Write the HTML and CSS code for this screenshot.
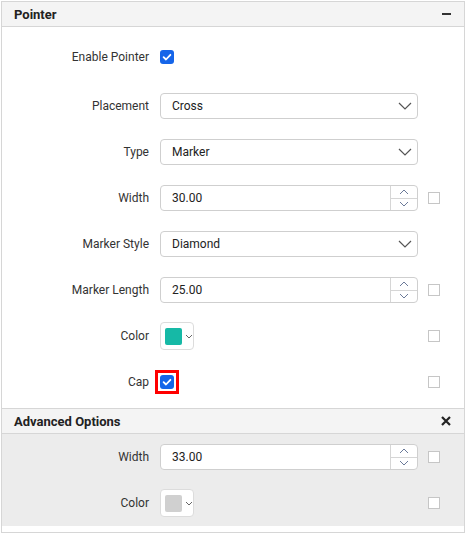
FILE: index.html
```html
<!DOCTYPE html>
<html>
<head>
<meta charset="utf-8">
<link rel="stylesheet" href="styles.css">
</head>
<body>
<div class="panel">
  <div class="hdr first">
    <span class="title">Pointer</span>
    <span class="minus"></span>
  </div>
  <div class="section">
    <div class="row r-first">
      <label class="lbl">Enable Pointer</label>
      <div class="ctl"><span class="cb on"><svg viewBox="0 0 14 14" width="14" height="14"><path d="M3.6 7.2 L6 9.5 L10.4 4.8" fill="none" stroke="#fff" stroke-width="1.8" stroke-linecap="round" stroke-linejoin="round"/></svg></span></div>
      <div></div>
    </div>
    <div class="row r-second">
      <label class="lbl">Placement</label>
      <div class="ctl"><div class="dd"><span>Cross</span><svg class="chev" viewBox="0 0 14 8" width="14" height="8"><path d="M1 1 L7 7 L13 1" fill="none" stroke="#555" stroke-width="1.2"/></svg></div></div>
      <div></div>
    </div>
    <div class="row">
      <label class="lbl">Type</label>
      <div class="ctl"><div class="dd"><span>Marker</span><svg class="chev" viewBox="0 0 14 8" width="14" height="8"><path d="M1 1 L7 7 L13 1" fill="none" stroke="#555" stroke-width="1.2"/></svg></div></div>
      <div></div>
    </div>
    <div class="row">
      <label class="lbl">Width</label>
      <div class="ctl"><div class="num"><span class="val">30.00</span><div class="spin"><span class="up"><svg viewBox="0 0 10 6" width="10" height="6"><path d="M1 5 L5 1 L9 5" fill="none" stroke="#6b7a99" stroke-width="1"/></svg></span><span class="down"><svg viewBox="0 0 10 6" width="10" height="6"><path d="M1 1 L5 5 L9 1" fill="none" stroke="#6b7a99" stroke-width="1"/></svg></span></div></div></div>
      <div class="cb off"></div>
    </div>
    <div class="row">
      <label class="lbl">Marker Style</label>
      <div class="ctl"><div class="dd"><span>Diamond</span><svg class="chev" viewBox="0 0 14 8" width="14" height="8"><path d="M1 1 L7 7 L13 1" fill="none" stroke="#555" stroke-width="1.2"/></svg></div></div>
      <div></div>
    </div>
    <div class="row">
      <label class="lbl">Marker Length</label>
      <div class="ctl"><div class="num"><span class="val">25.00</span><div class="spin"><span class="up"><svg viewBox="0 0 10 6" width="10" height="6"><path d="M1 5 L5 1 L9 5" fill="none" stroke="#6b7a99" stroke-width="1"/></svg></span><span class="down"><svg viewBox="0 0 10 6" width="10" height="6"><path d="M1 1 L5 5 L9 1" fill="none" stroke="#6b7a99" stroke-width="1"/></svg></span></div></div></div>
      <div class="cb off"></div>
    </div>
    <div class="row">
      <label class="lbl">Color</label>
      <div class="ctl"><div class="cp"><span class="sw teal"></span><svg viewBox="0 0 8 5" width="8" height="5"><path d="M1 1 L4 4 L7 1" fill="none" stroke="#666" stroke-width="1"/></svg></div></div>
      <div class="cb off"></div>
    </div>
    <div class="row">
      <label class="lbl">Cap</label>
      <div class="ctl"><span class="hl"><span class="cb on"><svg viewBox="0 0 14 14" width="14" height="14"><path d="M3.6 7.2 L6 9.5 L10.4 4.8" fill="none" stroke="#fff" stroke-width="1.8" stroke-linecap="round" stroke-linejoin="round"/></svg></span></span></div>
      <div class="cb off"></div>
    </div>
  </div>
  <div class="hdr">
    <span class="title">Advanced Options</span>
    <svg class="close" viewBox="0 0 10 10" width="10" height="10"><path d="M1 1 L9 9 M9 1 L1 9" stroke="#222" stroke-width="2.2"/></svg>
  </div>
  <div class="section adv">
    <div class="row">
      <label class="lbl">Width</label>
      <div class="ctl"><div class="num"><span class="val">33.00</span><div class="spin"><span class="up"><svg viewBox="0 0 10 6" width="10" height="6"><path d="M1 5 L5 1 L9 5" fill="none" stroke="#6b7a99" stroke-width="1"/></svg></span><span class="down"><svg viewBox="0 0 10 6" width="10" height="6"><path d="M1 1 L5 5 L9 1" fill="none" stroke="#6b7a99" stroke-width="1"/></svg></span></div></div></div>
      <div class="cb off"></div>
    </div>
    <div class="row">
      <label class="lbl">Color</label>
      <div class="ctl"><div class="cp"><span class="sw grey"></span><svg viewBox="0 0 8 5" width="8" height="5"><path d="M1 1 L4 4 L7 1" fill="none" stroke="#666" stroke-width="1"/></svg></div></div>
      <div class="cb off"></div>
    </div>
  </div>
  <div class="foot"></div>
</div>
</body>
</html>
```
FILE: styles.css
```css
* { box-sizing: border-box; }
html, body { margin: 0; padding: 0; background: #fff; }
body {
  font-family: Roboto, "Liberation Sans", sans-serif;
  font-size: 12px;
  color: #333;
}
.panel {
  margin: 1px 0 0 1px;
  width: 464px;
  border: 1px solid #d6d6d6;
}
.hdr {
  height: 26px;
  background: #f4f4f4;
  border-bottom: 1px solid #d6d6d6;
  display: flex;
  align-items: center;
  justify-content: space-between;
  padding: 0 12px 0 12px;
}
.hdr:not(.first) { border-top: 1px solid #d6d6d6; }
.hdr.first { height: 25px; }
.title {
  font-weight: 700;
  font-size: 13px;
  color: #222;
}
.minus {
  width: 9px;
  height: 2px;
  background: #333;
  margin-right: 1px;
}
.close { margin-right: 1px; }
.section { padding-bottom: 3px; }
.section.adv { background: #ececec; padding-bottom: 0; }
.row {
  display: grid;
  grid-template-columns: 147px 258px 12px;
  column-gap: 11px;
  align-items: center;
  height: 46px;
}
.row > .cb.off { margin-left: -1px; }
.r-first { height: 46px; margin-top: 7px; }
.r-second { margin-top: 3px; }
.lbl { text-align: right; color: #333; font-size: 12px; }
.ctl { display: flex; align-items: center; }
.dd, .num {
  width: 258px;
  height: 26px;
  border: 1px solid #cfcfcf;
  border-radius: 4px;
  background: #fff;
  display: flex;
  align-items: center;
}
.dd { justify-content: space-between; padding: 0 5px 0 11px; color: #222; }
.num .val { flex: 1; padding-left: 11px; color: #222; }
.spin {
  width: 27px;
  height: 100%;
  border-left: 1px solid #d6d6d6;
  display: flex;
  flex-direction: column;
}
.spin span {
  flex: 1;
  display: flex;
  align-items: center;
  justify-content: center;
}
.spin .up { border-bottom: 1px solid #d6d6d6; }
.cb {
  display: inline-flex;
  width: 14px;
  height: 14px;
  border-radius: 3px;
  align-items: center;
  justify-content: center;
}
.cb.on { background: #1565e9; }
.cb.off {
  width: 12px;
  height: 12px;
  border: 1px solid #c6c6c6;
  border-radius: 0;
  background: #fff;
}
.hl {
  display: inline-flex;
  margin-left: -5px;
  padding: 2px;
  border: 3px solid #ff0000;
}
.cp {
  width: 34px;
  height: 28px;
  border: 1px solid #dcdcdc;
  border-radius: 4px;
  background: #fff;
  display: flex;
  align-items: center;
  padding-left: 4px;
  gap: 3px;
}
.sw { width: 17px; height: 17px; border-radius: 2px; }
.sw.teal { background: #16b9a6; }
.sw.grey { background: #d0d0d0; }
.foot { height: 6px; background: #fff; }
```
